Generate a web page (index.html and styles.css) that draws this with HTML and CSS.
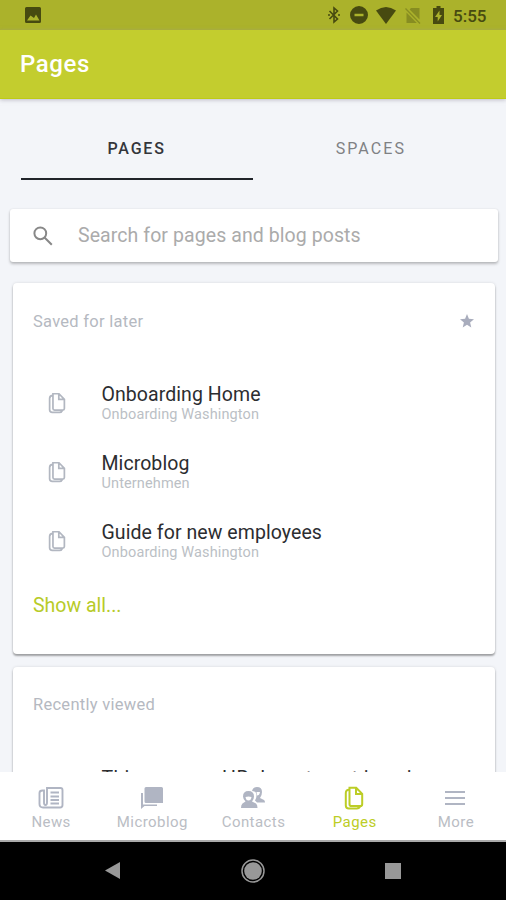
FILE: index.html
```html
<!DOCTYPE html>
<html lang="en">
<head>
<meta charset="utf-8">
<title>Pages</title>
<link rel="stylesheet" href="styles.css">
</head>
<body>
<svg class="defs" width="0" height="0" aria-hidden="true">
  <symbol id="pages" viewBox="0 0 20 24">
    <path d="M5.500 1.700h6.700l6 6.200v10.300q0 1.800-1.800 1.800H7.300q-1.800 0-1.800-1.800z M12 1.700v6.200h6.200 M5.500 3.500q-3.700.2-3.700 3.500v12.500q0 2.900 3 2.900h8q2.500 0 3.500-2.400"/>
  </symbol>
</svg>
<div class="screen">
  <header class="status">
    <svg class="photo" viewBox="0 0 16 16"><path fill-rule="evenodd" d="M1.500 0h13Q16 0 16 1.500v13q0 1.500-1.500 1.500h-13Q0 16 0 14.500v-13Q0 0 1.500 0zM2 13.500h12.500L11 7.500 9 11 5.500 8.500z"/></svg>
    <div class="indicators">
      <svg width="12" height="18" viewBox="0 0 12 18"><path d="M1.500 5l8 8L6 16V2l3.500 3-8 8" fill="none" stroke="currentColor" stroke-width="1.600"/><circle cx="1" cy="9" r="1"/><circle cx="11" cy="9" r="1"/></svg>
      <svg width="18" height="18" viewBox="0 0 18 18"><path fill-rule="evenodd" d="M9 0a9 9 0 1 0 0 18A9 9 0 0 0 9 0zM4.500 7.800h9v2.400h-9z"/></svg>
      <svg width="20" height="17" viewBox="0 0 20 17"><path d="M0 3.500Q10-3.500 20 3.500L10 17z"/></svg>
      <svg class="faint" width="16" height="17" viewBox="0 0 16 17"><path d="M6 1h8.500v11.500L4.600 2.500zM1.500 5.600l10.300 10.400H1.500z"/><path d="M.5 1.500l14.500 15" stroke="currentColor" stroke-width="1.300"/></svg>
      <svg width="11" height="18" viewBox="0 0 11 18"><path fill-rule="evenodd" d="M3.500 0h4v2H11v16H0V2h3.500zM6.500 4.500L2 11h2.700v4.500L9 9H6.500z"/></svg>
      <span class="clock">5:55</span>
    </div>
  </header>
  <div class="titlebar"><h1>Pages</h1></div>
  <main>
    <nav class="tabs"><span class="tab selected">PAGES</span><span class="tab spaces">SPACES</span></nav>
    <div class="search">
      <svg viewBox="0 0 20 20"><circle cx="7.300" cy="7.300" r="5.900"/><path d="M11.500 11.500l7.300 7.300"/></svg>
      <span>Search for pages and blog posts</span>
    </div>
    <section class="card saved">
      <div class="cardhead"><h2>Saved for later</h2><svg class="star" viewBox="0 0 14 14"><path d="M7 0l1.900 4.800 5.100.4-3.900 3.300 1.200 5L7 10.800l-4.300 2.700 1.200-5L0 5.200l5.100-.4z"/></svg></div>
      <div class="rows">
        <div class="row"><svg class="doc"><use href="#pages"/></svg><div><div class="name">Onboarding Home</div><div class="place">Onboarding Washington</div></div></div>
        <div class="row"><svg class="doc"><use href="#pages"/></svg><div><div class="name">Microblog</div><div class="place">Unternehmen</div></div></div>
        <div class="row"><svg class="doc"><use href="#pages"/></svg><div><div class="name">Guide for new employees</div><div class="place">Onboarding Washington</div></div></div>
      </div>
      <a class="all">Show all...</a>
    </section>
    <section class="card recent">
      <div class="cardhead"><h2>Recently viewed</h2></div>
      <div class="rows"><div class="row"><span class="doc"></span><div class="name">This our new HR department is uni</div></div></div>
    </section>
  </main>
  <nav class="bottom">
    <div class="item"><svg width="26" height="24" viewBox="0 0 26 24" class="line"><path d="M9 2h13.500q2 0 2 2v15q0 2.500-2.500 2.500H5q-3.500 0-3.500-3.500V7q0-2.500 3-2.500H6v12q0 2.500 1.500 2.500T9 16.500zM12.500 6.500H21M12.500 10.500H21M12.500 14H21M12.500 17.500H21"/></svg><span>News</span></div>
    <div class="item"><svg width="24" height="24" viewBox="0 0 24 24"><path d="M6 1h15.500Q23 1 23 2.500V17H6q-1.500 0-1.500-1.500v-13Q4.500 1 6 1zM1 7h2v11.500h14V20H4.500L1 23z"/></svg><span>Microblog</span></div>
    <div class="item"><svg width="24" height="24" viewBox="0 0 24 24"><path d="M11 5q1-4 5-4 5 0 5 5 0 3.500-2 6l4 2q1 .7 1 2.500h-8l-2-2q1.500-2 1.500-5Q15.500 5 11 5z"/><path fill-rule="evenodd" d="M7.500 5q5.500 0 5.500 5.500 0 3-2 5l4 2q1.500 1 1.500 4.500H0q0-3.500 1.500-4.500l3-2Q2 13 2 10.500 2 5 7.500 5zM4.500 11q.5 3.500 3 3.500t3-3.500q-3-1-6 0z"/><path class="face" d="M15.500 6h3.500q-.5 3.500-3 3.500z"/></svg><span>Contacts</span></div>
    <div class="item active"><svg width="20" height="24"><use href="#pages"/></svg><span>Pages</span></div>
    <div class="item"><svg width="22" height="24" viewBox="0 0 22 24" class="line"><path d="M1 6h20M1 12h20M1 18h20"/></svg><span>More</span></div>
  </nav>
  <footer class="system">
    <div><svg width="16" height="18" viewBox="0 0 16 18"><path d="M15 0v17L0 8.500z"/></svg></div>
    <div><svg width="24" height="24" viewBox="0 0 24 24"><circle cx="12" cy="12" r="8.800"/><circle cx="12" cy="12" r="11" fill="none" stroke="currentColor" stroke-width="1.500"/></svg></div>
    <div><svg width="16" height="16" viewBox="0 0 16 16"><path d="M0 0h16v16H0z"/></svg></div>
  </footer>
</div>
</body>
</html>
```
FILE: styles.css
```css
* { box-sizing: border-box; }
body { margin: 0; font-family: Roboto, sans-serif; background: #f3f5f9; }
h1, h2 { margin: 0; font-weight: 400; }
svg { fill: currentColor; flex: none; display: block; }
.defs { position: absolute; }
.screen { width: 506px; height: 900px; display: flex; flex-direction: column; overflow: hidden; }
.status { height: 30px; flex: none; background: #abb22b; color: #474a10; display: flex; justify-content: space-between; align-items: center; padding: 0 18px 0 25px; }
.photo { width: 16px; height: 16px; }
.indicators { display: flex; align-items: center; height: 30px; }
.indicators svg:nth-child(2) { margin-left: 10px; }
.indicators svg:nth-child(3) { margin-left: 8px; }
.indicators svg:nth-child(4) { margin-left: 9px; }
.indicators svg:nth-child(5) { margin-left: 12px; }
.faint { opacity: .35; }
.clock { margin-left: 9px; width: 35px; font-size: 17px; font-weight: 500; letter-spacing: 0; line-height: 30px; padding-top: 2px; white-space: nowrap; }
.titlebar { height: 69px; flex: none; background: #c3cd2e; border-bottom: 1px solid #becb14; padding: 20px; box-shadow: 0 1px 4px #9995a599; z-index: 1; }
h1 { color: #fff; font-size: 24px; line-height: 28px; font-weight: 500; letter-spacing: .6px; }
main { flex: 1; min-height: 0; overflow: hidden; display: flex; flex-direction: column; }
.tabs { height: 81px; flex: none; margin: 0 19px 0 20.500px; display: flex; }
.tab { flex: 1; text-align: center; font-size: 16px; font-weight: 500; line-height: 20px; letter-spacing: 1.800px; padding-top: 40px; }
.tab.spaces { padding-left: 2px; font-weight: 400; letter-spacing: 2.100px; color: #7f8184; }
.tab.selected { color: #34363b; border-bottom: 2px solid #20242a; }
.search { margin: 29px 8px 0 10px; height: 53px; flex: none; background: #fff; border-radius: 3px; box-shadow: 0 2px 3px #0000003d, 0 0 2px #0000001a; display: flex; align-items: center; padding-left: 23px; color: #ababab; font-size: 19.500px; letter-spacing: .08px; }
.search svg { width: 20px; height: 20px; margin-right: 25px; fill: none; stroke: #888; stroke-width: 2; }
.card { margin: 0 11px 0 13px; background: #fff; border-radius: 4px; box-shadow: 0 2px 2px #00000052, 0 0 3px #0000001f; flex: none; padding: 0 20px; }
.saved { margin-top: 21px; height: 371px; }
.recent { margin-top: 13px; height: 200px; }
.recent .name { letter-spacing: .36px; }
.cardhead { padding-top: 29px; display: flex; justify-content: space-between; height: 85px; }
h2 { color: #b5b9c1; font-size: 16.500px; line-height: 20px; letter-spacing: .27px; }
.recent h2 { margin-top: -1px; }
.star { width: 14px; height: 14px; margin: 2px 1px 0; color: #a9adbd; }
.row { height: 69px; display: flex; padding-top: 13px; }
.doc { width: 18px; height: 22px; margin: 11px 35.500px 0 15px; fill: none; stroke: #b2b7c1; stroke-width: 1.900; }
.name { color: #2c2d30; font-size: 19.500px; line-height: 27px; letter-spacing: .07px; white-space: nowrap; }
.place { color: #bbbfc5; font-size: 14.500px; line-height: 16px; margin-top: -1px; letter-spacing: .12px; }
.all { display: block; color: #b7cb28; font-size: 19.500px; line-height: 24px; padding-top: 19px; }
.bottom { height: 70px; flex: none; display: flex; background: #fff; border-bottom: 2px solid #aaa; color: #b0b5c3; }
.item { flex: 1; display: flex; flex-direction: column; align-items: center; padding-top: 14px; font-size: 15px; line-height: 20px; letter-spacing: .43px; }
.item span { margin-top: 2px; color: #babdc4; padding-left: 1px; }
.item svg { height: 24px; }
.face { fill: #fff; }
.line { fill: none; stroke: currentColor; stroke-width: 1.900; }
.item.active, .item.active span { color: #bccd26; }
.active svg { fill: none; stroke: currentColor; stroke-width: 2; }
.system { height: 58px; flex: none; background: #000; color: #989898; display: grid; grid-template-columns: repeat(3, 140px); justify-content: center; align-items: center; justify-items: center; }
```
